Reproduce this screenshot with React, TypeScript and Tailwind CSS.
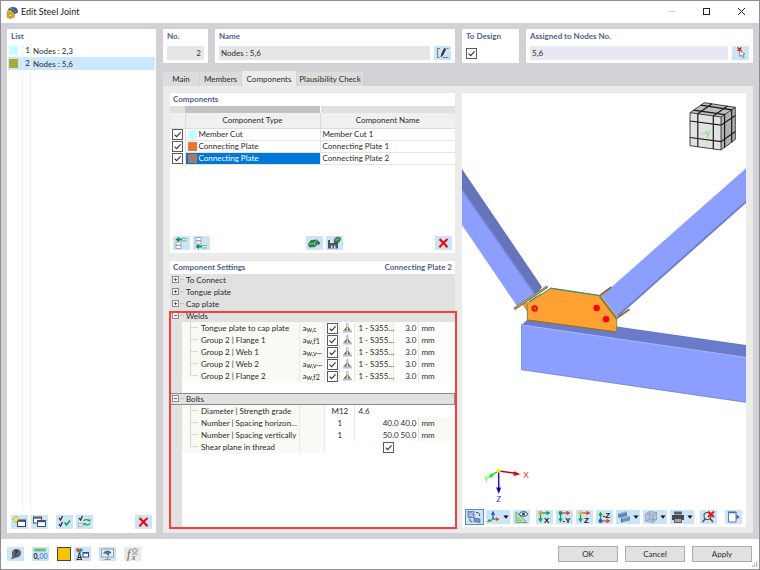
import { useState, type ReactNode } from "react";
import clsx from "clsx";

// ── data ──────────────────────────────────────────────────────────────────────
const JOINTS = [
  { no: 1, name: "Nodes : 2,3", swatch: "bg-[#c8ffff]" },
  { no: 2, name: "Nodes : 5,6", swatch: "bg-[#a9a93a]" },
];

const TABS = [
  { name: "Main", width: "w-[37px]" },
  { name: "Members", width: "w-[42px]" },
  { name: "Components", width: "w-[55px]" },
  { name: "Plausibility Check", width: "w-[67px]" },
];

const COMPONENTS = [
  { type: "Member Cut", name: "Member Cut 1", swatch: "bg-[#c8ffff]" },
  { type: "Connecting Plate", name: "Connecting Plate 1", swatch: "bg-[#e8772e]" },
  { type: "Connecting Plate", name: "Connecting Plate 2", swatch: "bg-[#a67a68]" },
];

const WELDS = [
  { label: "Tongue plate to cap plate", sub: "w,c" },
  { label: "Group 2 | Flange 1", sub: "w,f1" },
  { label: "Group 2 | Web 1", sub: "w,v···" },
  { label: "Group 2 | Web 2", sub: "w,v···" },
  { label: "Group 2 | Flange 2", sub: "w,f2" },
];

const SPACINGS = [
  { label: "Number | Spacing horizon...", count: "1", value: "40.0 40.0" },
  { label: "Number | Spacing vertically", count: "1", value: "50.0 50.0" },
];

// ── small controls ────────────────────────────────────────────────────────────
function Check({ label }: { label: string }) {
  return (
    <label className="relative inline-block size-[11px] align-middle">
      <input
        type="checkbox"
        defaultChecked
        aria-label={label}
        className="peer block size-full appearance-none border border-[#5a5a5a] bg-white"
      />
      <svg
        viewBox="0 0 11 11"
        className="pointer-events-none absolute inset-0 hidden size-full peer-checked:block"
      >
        <path d="M2.6 5.6 4.6 7.6 8.6 3.4" fill="none" stroke="#333" strokeWidth="1.1" />
      </svg>
    </label>
  );
}

interface ToolProps {
  label: string;
  children: ReactNode;
  caret?: boolean;
  active?: boolean;
  disabled?: boolean;
}

function Tool({ label, children, caret, active, disabled }: ToolProps) {
  return (
    <button
      type="button"
      aria-label={label}
      disabled={disabled}
      className={clsx(
        "flex h-[14px] shrink-0 items-center",
        disabled ? "bg-[#e9e9e9]" : "bg-[#cce4f7]",
        active && "outline outline-[#5b8fc0]",
      )}
    >
      <svg viewBox="0 0 17 14" className="h-[14px] w-[17px]">
        {children}
      </svg>
      {caret && (
        <svg viewBox="0 0 7 14" className="h-[14px] w-[7px]">
          <path d="M.5 5.5h5L3 8.700z" fill="#111" />
        </svg>
      )}
    </button>
  );
}

function RedCross() {
  return (
    <path d="M4.500 3.200C6.600 5 9.600 8 12.500 11.200M12.600 3C9.600 5.400 6.600 8.400 4.400 11.400" stroke="#f00808" strokeWidth="2.200" fill="none" />
  );
}

function Heading({ children }: { children: ReactNode }) {
  return <h2 className="font-bold text-[#4f6090]">{children}</h2>;
}

// ── title bar ─────────────────────────────────────────────────────────────────
function TitleBar() {
  return (
    <header className="flex h-[22px] shrink-0 items-center bg-white pl-[5px]">
      <svg viewBox="0 0 13 13" className="size-[13px]">
        <path d="M1.500 4.200C3 1.200 7 .2 9.600 1.600 11.600 2.600 12.400 5 11.600 7L8.400 8 5 4.200z" fill="#3f5c86" />
        <path d="M2.500 3.200C4.500 2 8 2.200 9.400 6" fill="none" stroke="#86a3c8" strokeWidth=".8" />
        <path d="M1 5.600 4 4.400 6.600 5.800 8.600 8 8.200 11.200 4.400 12.600 1.200 11.600z" fill="#e3b52c" stroke="#8c6d14" strokeWidth=".5" />
        <circle cx="4.400" cy="9.200" r="1.700" fill="#f6dc7c" stroke="#7d6210" strokeWidth=".6" />
      </svg>
      <h1 className="ml-[2px] text-[9px] leading-3 text-[#222]">Edit Steel Joint</h1>
      <div className="ml-auto flex">
        <button type="button" aria-label="Minimize" className="h-[22px] w-[35px]">
          <svg viewBox="0 0 35 22" className="size-full">
            <path d="M14 10.500h7" stroke="#d4d4d4" />
          </svg>
        </button>
        <button type="button" aria-label="Maximize" className="h-[22px] w-[35px]">
          <svg viewBox="0 0 35 22" className="size-full">
            <rect x="14.500" y="7.500" width="6" height="6" fill="none" stroke="#222" />
          </svg>
        </button>
        <button type="button" aria-label="Close" className="h-[22px] w-[35px]">
          <svg viewBox="0 0 35 22" className="size-full">
            <path d="m14 7 7 7m0-7-7 7" stroke="#222" />
          </svg>
        </button>
      </div>
    </header>
  );
}

// ── list of joints ────────────────────────────────────────────────────────────
function JointList() {
  const [selected, setSelected] = useState(2);

  return (
    <aside className="flex w-[149px] shrink-0 flex-col bg-white">
      <div className="px-1 pt-[2px] pb-[3px]">
        <Heading>List</Heading>
      </div>
      <div className="flex flex-1 flex-col px-px">
        <ul>
          {JOINTS.map((j) => (
            <li key={j.no}>
              <button
                type="button"
                onClick={() => setSelected(j.no)}
                className={clsx(
                  "flex h-[13px] w-full items-center text-left",
                  selected === j.no && "bg-[#cce8ff]",
                )}
              >
                <span className={clsx("ml-px size-[9px]", j.swatch)} />
                <span className="ml-1 h-full w-[9px] border-x border-[#f0f0f0] text-right leading-[13px]">
                  {j.no}
                </span>
                <span className="ml-[2px]">{j.name}</span>
              </button>
            </li>
          ))}
        </ul>
        <div className="ml-[14px] w-[9px] flex-1 border-x border-[#f0f0f0]" />
      </div>
      <div className="flex items-center gap-[3px] p-1">
        <Tool label="New">
          <rect x="6.500" y="5" width="8" height="6.500" fill="#fff" stroke="#34405a" />
          <path d="M6.500 6h8" stroke="#34405a" strokeWidth="1.600" />
          <path d="M5 1v7M1.500 4.500h7M2.500 2l5 5M7.500 2l-5 5" stroke="#b7a614" strokeWidth=".9" />
          <circle cx="5" cy="4.500" r="1.800" fill="#fff04a" />
        </Tool>
        <Tool label="Copy">
          <rect x="2.500" y="2" width="8" height="6" fill="#fff" stroke="#46506a" />
          <path d="M2.500 3h8" stroke="#46506a" strokeWidth="1.400" />
          <rect x="6.500" y="5.500" width="8" height="6" fill="#fff" stroke="#46506a" />
          <path d="M6.500 6.500h8" stroke="#46506a" strokeWidth="1.400" />
        </Tool>
        <span className="w-[2px]" />
        <Tool label="Select all">
          <path d="m3 3 1.500 2 2-4M3 9l1.500 2 2-4" fill="none" stroke="#222" strokeWidth="1.200" />
          <path d="m8.500 7.500 2 2.500 3.500-4.500" fill="none" stroke="#22a045" strokeWidth="1.700" />
        </Tool>
        <Tool label="Invert selection">
          <path d="m3 3 1.500 2 2-4" fill="none" stroke="#222" strokeWidth="1.200" />
          <rect x="2.500" y="8.500" width="3.500" height="3" fill="#fff" stroke="#99a" strokeWidth=".7" />
          <path d="M7.500 6c1-1.800 4-1.800 5.500-.5M14 8.500c-1 1.800-4 1.800-5.500.5" fill="none" stroke="#22a045" strokeWidth="1.400" />
          <path d="m14.500 3.800-.3 3-2.700-.8zM7.200 10.700l.3-3 2.700.9z" fill="#22a045" />
        </Tool>
        <span className="flex-1" />
        <Tool label="Delete">
          <RedCross />
        </Tool>
      </div>
    </aside>
  );
}

// ── header fields ─────────────────────────────────────────────────────────────
function HeaderFields() {
  return (
    <div className="grid grid-cols-[45px_240px_57px_1fr] gap-[7px]">
      <div className="h-[34px] bg-white px-1 pt-[2px]">
        <label htmlFor="joint-no" className="block font-bold text-[#4f6090]">
          No.
        </label>
        <input
          id="joint-no"
          defaultValue="2"
          className="mt-[5px] block h-[14px] w-full bg-[#e6e6e6] px-[3px] text-right text-[#333]"
        />
      </div>
      <div className="h-[34px] bg-white px-1 pt-[2px]">
        <label htmlFor="joint-name" className="block font-bold text-[#4f6090]">
          Name
        </label>
        <div className="mt-[5px] flex gap-1">
          <input
            id="joint-name"
            defaultValue="Nodes : 5,6"
            className="h-[14px] min-w-0 flex-1 bg-[#e6e6e6] px-[2px]"
          />
          <Tool label="Edit name">
            <path d="M6 2.500H3.500v9h2M9 11.500h5.500" fill="none" stroke="#777" />
            <path d="m11.200 2.500-3.200 6.500" stroke="#333" strokeWidth="2.200" />
            <path d="m6.800 11.500.2-3 1.800 1z" fill="#222" />
            <path d="M12.500 2.500h2" stroke="#777" />
          </Tool>
        </div>
      </div>
      <div className="h-[34px] bg-white px-1 pt-[2px]">
        <Heading>To Design</Heading>
        <div className="mt-[7px] flex">
          <Check label="To Design" />
        </div>
      </div>
      <div className="h-[34px] bg-white px-1 pt-[2px]">
        <label htmlFor="assigned" className="block font-bold text-[#4f6090]">
          Assigned to Nodes No.
        </label>
        <div className="mt-[5px] flex gap-1">
          <input
            id="assigned"
            defaultValue="5,6"
            className="h-[14px] min-w-0 flex-1 bg-[#e8e8f3] px-[2px]"
          />
          <Tool label="Pick nodes">
            <path d="m7.500 4 .3 6.500 1.700-1.500 1.300 2.800 1.300-.6-1.300-2.600 2.200-.4z" fill="#fff" stroke="#666" strokeWidth=".7" />
            <path d="m5.500 1.500 4 3.500m0-3.500-4 3.500" stroke="#e8151b" strokeWidth="1.400" />
          </Tool>
        </div>
      </div>
    </div>
  );
}

// ── components table ──────────────────────────────────────────────────────────
function ComponentsCard() {
  return (
    <section className="flex h-[160px] flex-col bg-white">
      <div className="px-[3px] pt-px pb-[2px]">
        <Heading>Components</Heading>
      </div>
      <table className="w-full table-fixed border-collapse">
        <colgroup>
          <col className="w-[15px]" />
          <col />
          <col />
        </colgroup>
        <thead>
          <tr className="h-[7px]">
            <td className="bg-[#e0e0e0]" />
            <td className="bg-[#c3c3c3]" />
            <td className="border-l border-white bg-[#e0e0e0]" />
          </tr>
          <tr className="h-[15px] bg-[#f0f0f0]">
            <td className="border-r border-b border-[#dcdcdc]" />
            <th className="border-r border-b border-[#dcdcdc] font-normal">Component Type</th>
            <th className="border-b border-[#dcdcdc] font-normal">Component Name</th>
          </tr>
        </thead>
        <tbody>
          {COMPONENTS.map((c, i) => (
            <tr key={c.name} className="h-[12px]">
              <td className="border-r border-[#dcdcdc] p-0 text-center leading-none">
                <Check label={c.name} />
              </td>
              <td
                className={clsx(
                  "border-r border-b border-[#e4e4e4] p-0",
                  i === 2 && "bg-[#0078d7] text-white",
                )}
              >
                <div className="flex h-[11px] items-center">
                  <span className={clsx("ml-[2px] size-[9px]", c.swatch)} />
                  <span className="ml-[2px]">{c.type}</span>
                </div>
              </td>
              <td className="border-b border-[#e4e4e4] py-0 pl-[2px] leading-[11px]">{c.name}</td>
            </tr>
          ))}
        </tbody>
      </table>
      <div className="mt-auto flex gap-[3px] px-[3px] pb-[3px]">
        <Tool label="Insert above">
          <rect x="3" y="6" width="5" height="3" fill="#fff" stroke="#999" strokeWidth=".8" />
          <rect x="3" y="9.500" width="5" height="3" fill="#fff" stroke="#999" strokeWidth=".8" />
          <path d="M5 3.500h4" stroke="#159148" strokeWidth="2" />
          <path d="M2.500 3.500 6 .8v5.400z" fill="#159148" />
          <path d="M9 2.500h5M9 5h5" stroke="#6cb58c" strokeWidth=".9" />
        </Tool>
        <Tool label="Insert below">
          <rect x="3" y="1.500" width="5" height="3" fill="#fff" stroke="#999" strokeWidth=".8" />
          <rect x="3" y="5" width="5" height="3" fill="#fff" stroke="#999" strokeWidth=".8" />
          <path d="M5 10.500h4" stroke="#159148" strokeWidth="2" />
          <path d="M2.500 10.500 6 7.800v5.400z" fill="#159148" />
          <path d="M9 9.500h5M9 12h5" stroke="#6cb58c" strokeWidth=".9" />
        </Tool>
        <span className="flex-1" />
        <Tool label="Load component">
          <path d="M2.500 8 5 4.500l6-.5 1 3-2.500 3.500-6 .5z" fill="#2f8a4a" stroke="#14532a" strokeWidth=".7" />
          <path d="M3 8l5.500-.5 2-3M8.500 7.500l1 3" fill="none" stroke="#9fd4ab" strokeWidth=".8" />
          <path d="M12 4.500 14.500 7 12 9.500z" fill="#555" />
        </Tool>
        <Tool label="Save component">
          <path d="M2 4h10v8.500H2z" fill="#4e5563" />
          <path d="M4 4h4v3H4zM5 9.500h1.500v3H5zM8 9.500h1.500v3H8z" fill="#dfe7ef" />
          <path d="m8 4 2-2.500 4-.3.700 2.300-2 2.800-4 .3z" fill="#2f8a4a" stroke="#14532a" strokeWidth=".6" />
          <path d="m8.500 4 3.500-.3 1.500-2" fill="none" stroke="#9fd4ab" strokeWidth=".7" />
        </Tool>
        <span className="w-[86px]" />
        <Tool label="Delete component">
          <RedCross />
        </Tool>
      </div>
    </section>
  );
}

// ── component settings ────────────────────────────────────────────────────────
function Group({ label, open, framed }: { label: string; open?: boolean; framed?: boolean }) {
  return (
    <tr className="h-[12px] bg-[#e1e1e1]">
      <th
        colSpan={8}
        scope="rowgroup"
        className={clsx("p-0 text-left font-normal", framed && "outline -outline-offset-1 outline-[#8a8a8a]")}
      >
        <button type="button" aria-expanded={!!open} className="flex h-[12px] w-full items-center">
          <svg viewBox="0 0 16 12" className="h-[12px] w-4">
            <rect x="2.500" y="2.500" width="6" height="6" fill="#f4f4f4" stroke="#8c8c8c" />
            <path d={open ? "M4 5.500h3" : "M4 5.500h3M5.500 4v3"} stroke="#555" strokeWidth=".9" />
            <path d="M10 5.500h4" stroke="#c4c4c4" />
          </svg>
          <span>{label}</span>
        </button>
      </th>
    </tr>
  );
}

function LabelCell({ children, last }: { children: ReactNode; last?: boolean }) {
  return (
    <>
      <td className="bg-[#e1e1e1] p-0" />
      <th scope="row" className="border-r border-[#e8e8e4] bg-[#fafaf5] p-0 text-left font-normal">
        <div className="flex h-[12px] items-center whitespace-nowrap">
          <svg viewBox="0 0 19 12" className="h-[12px] w-[19px] shrink-0">
            <path d={last ? "M8.500 0v5.500H16" : "M8.500 0v12M8.500 5.500H16"} fill="none" stroke="#d6d6d6" />
          </svg>
          {children}
        </div>
      </th>
    </>
  );
}

function SettingsCard() {
  const symbol = "border-r border-[#e8e8e4] bg-[#fafaf5] p-0 pl-[2px] whitespace-nowrap";

  return (
    <section className="relative flex flex-1 flex-col bg-white">
      <div className="flex justify-between px-[3px] pt-px pb-[2px]">
        <Heading>Component Settings</Heading>
        <Heading>Connecting Plate 2</Heading>
      </div>
      <table className="w-full table-fixed border-collapse">
        <colgroup>
          <col className="w-[12px]" />
          <col />
          <col className="w-[25px]" />
          <col className="w-[15px]" />
          <col className="w-[15px]" />
          <col className="w-[39px]" />
          <col className="w-[25px]" />
          <col className="w-[36px]" />
        </colgroup>
        <tbody>
          <Group label="To Connect" />
          <Group label="Tongue plate" />
          <Group label="Cap plate" />
          <Group label="Welds" open />
          {WELDS.map((w, i) => (
            <tr key={w.label} className="h-[12px]">
              <LabelCell last={i === WELDS.length - 1}>{w.label}</LabelCell>
              <td className={symbol}>
                <div className="flex h-[12px] items-center">
                  <span>a</span>
                  <span className="pt-[2px] text-[7px]">{w.sub}</span>
                </div>
              </td>
              <td className="border-r border-[#e8e8e4] p-0 text-center leading-none">
                <Check label={w.label} />
              </td>
              <td className="border-r border-[#e8e8e4] p-0">
                <svg viewBox="0 0 15 12" className="h-[12px] w-[15px]">
                  <path d="M6 1h2.500v5H6z" fill="#b4cdee" />
                  <path d="M3 8.500h9v2H3z" fill="#a3c0e8" />
                  <path d="M6.700 4.500v4H3.500zM7.800 4.500v4H11z" fill="#9a5f1c" />
                </svg>
              </td>
              <td className="border-r border-[#e8e8e4] bg-[#fafaf5] p-0 pl-[3px] whitespace-nowrap">1 - S355...</td>
              <td className="border-r border-[#e8e8e4] p-0 pr-[2px] text-right">3.0</td>
              <td className="bg-[#fdfdfa] p-0 pl-[2px]">mm</td>
            </tr>
          ))}
          <tr className="h-[11px]">
            <td className="bg-[#e1e1e1] p-0" />
            <td colSpan={7} className="p-0" />
          </tr>
          <Group label="Bolts" open framed />
          <tr className="h-[12px]">
            <LabelCell>Diameter | Strength grade</LabelCell>
            <td className={symbol} />
            <td colSpan={2} className="border-r border-[#e8e8e4] p-0 text-center">M12</td>
            <td colSpan={3} className="p-0 pl-[3px]">4.6</td>
          </tr>
          {SPACINGS.map((s) => (
            <tr key={s.label} className="h-[12px]">
              <LabelCell>{s.label}</LabelCell>
              <td className={symbol} />
              <td colSpan={2} className="border-r border-[#e8e8e4] p-0 text-center">{s.count}</td>
              <td colSpan={2} className="border-r border-[#e8e8e4] p-0 pr-[2px] text-right">{s.value}</td>
              <td className="bg-[#fafaf5] p-0 pl-[2px]">mm</td>
            </tr>
          ))}
          <tr className="h-[12px]">
            <LabelCell last>Shear plane in thread</LabelCell>
            <td className={symbol} />
            <td colSpan={2} className="p-0" />
            <td colSpan={2} className="p-0 pl-1 text-center leading-none">
              <Check label="Shear plane in thread" />
            </td>
            <td />
          </tr>
        </tbody>
      </table>
      <div className="w-[12px] flex-1 bg-[#e1e1e1]" />
      {/* highlight frame around welds and bolts */}
      <div className="pointer-events-none absolute top-[50px] -right-[2px] -bottom-[2px] -left-px border-2 border-[#f5403c]" />
    </section>
  );
}

// ── 3d view ───────────────────────────────────────────────────────────────────
function Scene() {
  return (
    <svg viewBox="462 93 284 415" preserveAspectRatio="xMidYMin slice" className="h-[415px] w-full">
      {/* left diagonal */}
      <path d="M462 169 542 287 535 297 462 191z" fill="#6675bb" />
      <path d="M462 190 535.500 295.500 517 306 462 225z" fill="#8c9fff" />
      <path d="M462 190 535.500 295.500" stroke="#7a8bdc" strokeWidth="1.500" />
      {/* right diagonal */}
      <path d="M746 200v3L619 316l-4-1z" fill="#6d7dcb" />
      <path d="M746 168.300v32.200L616.700 315.500 601.700 295.700z" fill="#8c9fff" />
      {/* chord */}
      <path d="M521.500 325 527 320l90 6.500L746 345v13z" fill="#6b7bc9" />
      <path d="M521.500 324.500 746 357v45.500L521.500 369.700z" fill="#8c9fff" />
      <path d="M522 325 746 357.500" stroke="#a3b3ff" strokeWidth="1.200" />
      <path d="M521.500 369.700 746 402.300" stroke="#6f80d6" strokeWidth=".8" />
      <path d="M521.500 324v46" stroke="#5c9db4" strokeWidth=".8" />
      {/* gusset plate */}
      <path d="m522 304 5.500-2v10z" fill="#e99a35" />
      <path d="M527.300 303.500 550.700 288.500 600 295.700 616.700 318.300V332l-89.400-12z" fill="#ffa033" stroke="#6f8a52" />
      <path d="M527.300 320 616.700 332" stroke="#a06c2a" strokeWidth="1.200" />
      <path d="M529 301.500 550.700 288l49.300 7.500" fill="none" stroke="#3d8d80" />
      {/* cap plates */}
      <path d="m514.300 308.800 33.200-22.300" stroke="#4f7357" strokeWidth="2.600" />
      <path d="m515 308 32-21.400" stroke="#eea13c" strokeWidth="1.100" />
      <path d="m541 293.500 8.500-5.500" stroke="#fff" />
      <path d="m600 295.500 11.500-8.500M617 318l12.500-8.800" stroke="#8c6a3c" strokeWidth="2" />
      <path d="m600 296 17 22.500" stroke="#4f7357" strokeWidth="2.400" />
      <path d="m600.500 296 16.500 22" stroke="#eea13c" />
      {/* bolts */}
      <circle cx="534.700" cy="308.400" r="3.200" fill="#f00" />
      <path d="m533 306.700 3.400 3.400m0-3.400-3.400 3.400" stroke="#ff9c9c" strokeWidth=".7" />
      <circle cx="596.700" cy="308" r="3.200" fill="#f00" />
      <circle cx="606" cy="319.300" r="3.200" fill="#f00" />

      {/* navigation cube */}
      <path d="M690 112.700 704.300 102.700 735.300 107.300 721 117z" fill="#bdbdbd" />
      <path d="M690 112.700 721 117v33l-31-4.300z" fill="#e2e2e2" />
      <path d="M721 117 735.300 107.300v32.200L721 150z" fill="#b0b0b0" />
      <g fill="none" stroke="#1a1a1a" strokeWidth="1.200">
        <path d="M690 112.700 704.300 102.700 735.300 107.300 721 117zM690 112.700v33L721 150l14.300-10.500v-32.200M721 117v33" strokeWidth=".8" />
        <path d="M697.800 113.800v33M713.300 116v33M690 121l31 4.200 14.300-9.800M690 137.500l31 4.200 14.300-10.300" />
        <path d="m697.800 113.800 14.200-10M713.300 116l14.200-10M693.600 110.200l31 4.400v33M700.700 105.200l31 4.600v32.500" />
      </g>
      <text x="702" y="135.500" fontSize="9" fontWeight="700" fill="#7be07b">-y</text>
      <text x="726" y="132" fontSize="6" fill="#d98a8a">x</text>

      {/* axes */}
      <path d="M498.700 471v17" stroke="#1010c8" strokeWidth="1.400" />
      <path d="M496.200 487.500h5l-2.500 6.500z" fill="#0a0ab8" />
      <path d="m498.700 471 17 2.300" stroke="#d00000" strokeWidth="1.400" />
      <path d="m514 471.200 6.500 3-7 1.700z" fill="#e00000" />
      <path d="m498.700 471-7 4" stroke="#10c010" strokeWidth="1.400" />
      <path d="m488.500 478 2-4.500 3.500 2.800z" fill="#0f0" />
      <circle cx="498.700" cy="470.700" r="2" fill="#ffee00" />
      <text x="523.500" y="477.500" fontSize="8" fill="#f01818">X</text>
      <text x="484" y="481.500" fontSize="7" fill="#20e020">Y</text>
      <text x="496.200" y="501.500" fontSize="8" fill="#2a2ae8">Z</text>
    </svg>
  );
}

interface AxisProps {
  axis: string;
  x: number;
  right: string;
  dot: string;
}

function AxisIcon({ axis, x, right, dot }: AxisProps) {
  return (
    <>
      <path d="M4.500 3h7" stroke={right} strokeWidth="1.200" />
      <path d="m10.500.7 4 2.300-4 2.300z" fill={right} />
      <path d="M4.500 3v6" stroke="#159a54" strokeWidth="1.200" />
      <path d="m2.300 8.500 2.200 4 2.200-4z" fill="#159a54" />
      <circle cx="4.500" cy="3" r="1.900" fill={dot} />
      <AxisLetter x={x} y={12.5}>{axis}</AxisLetter>
    </>
  );
}

function AxisLetter({ x, y, children }: { x: number; y: number; children: ReactNode }) {
  return (
    <text
      x={x}
      y={y}
      fontSize="8"
      fontWeight="700"
      fill="#1a1a1a"
      className="font-['Liberation_Sans',sans-serif]"
    >
      {children}
    </text>
  );
}

function ViewToolbar() {
  return (
    <div className="mt-auto flex items-center gap-[3px] px-1 pb-[3px]">
      <Tool label="Show model" active>
        <rect x="2" y="1.500" width="6" height="6" fill="#7f9cd0" stroke="#5873a8" strokeWidth=".7" />
        <path d="m3 6.500 4-4M3 3l4 4" stroke="#e8f0fb" strokeWidth=".8" />
        <path d="m8 8 6 1v3.500l-6-1z" fill="#7d93b8" stroke="#4b5f88" strokeWidth=".7" />
        <path d="M10 2.500c3-.5 4 1.500 3.500 3.500M6.500 12C4 12 3.500 10.500 4 8.500" fill="none" stroke="#444" strokeWidth=".9" />
      </Tool>
      <Tool label="Axes" caret>
        <path d="M7 9V3.500" stroke="#1c50d8" strokeWidth="1.300" />
        <path d="m5 4.800 2-4 2 4z" fill="#1c50d8" />
        <path d="M7 9h4.500" stroke="#e04420" strokeWidth="1.300" />
        <path d="m10 7.200 3.500 2-3.500 1.800z" fill="#e04420" />
        <path d="M7 9l-3 2" stroke="#2aa84a" strokeWidth="1.300" />
        <path d="m1 12 2-3.200 1.800 2.700z" fill="#2aa84a" />
      </Tool>
      <Tool label="Measure">
        <path d="M3 2v10.500h11z" fill="#b5e3a5" stroke="#5fa060" strokeWidth=".8" />
        <path d="M5 8v2.500h3z" fill="#eaf6ff" stroke="#5fa060" strokeWidth=".6" />
        <ellipse cx="10.500" cy="4" rx="4" ry="2.300" fill="#fff" stroke="#28406e" />
        <circle cx="10.500" cy="4" r="1.500" fill="#28406e" />
      </Tool>
      <span />
      <Tool label="View in X">
        <AxisIcon axis="X" x={8} right="#159a54" dot="#e8a01a" />
      </Tool>
      <Tool label="View in -Y">
        <AxisIcon axis="-Y" x={6.5} right="#d9432a" dot="#159a54" />
      </Tool>
      <Tool label="View in Z">
        <AxisIcon axis="Z" x={8} right="#d9432a" dot="#d8c21a" />
      </Tool>
      <Tool label="View in -Z">
        <path d="M4.500 10.500V5" stroke="#159a54" strokeWidth="1.200" />
        <path d="m2.300 5.500 2.200-4 2.200 4z" fill="#159a54" />
        <path d="M4.500 11h7" stroke="#d9432a" strokeWidth="1.200" />
        <path d="m10.500 8.700 4 2.300-4 2.300z" fill="#d9432a" />
        <circle cx="4.500" cy="11" r="1.900" fill="#2455c8" />
        <AxisLetter x={6.5} y={7.5}>-Z</AxisLetter>
      </Tool>
      <Tool label="Display style" caret>
        <path d="m2 3.500 8-2 1 .8V6l-8 2-1-.8z" fill="#5e86b8" />
        <path d="m2 3.500 8-2 1 .8-8 2z" fill="#a2bfe2" />
        <path d="m5 8 8-2 1 .8v3.700l-8 2-1-.8z" fill="#6f91bb" />
        <path d="m5 8 8-2 1 .8-8 2z" fill="#a2bfe2" />
        <path d="M5 8v3.700l1 .8V8.800z" fill="#49698f" />
      </Tool>
      <Tool label="Transparency" caret>
        <path d="m2.500 4 4-2.500 7 1v7l-3.500 3-7.500-1.500z" fill="#b9c5dc" stroke="#8494b3" strokeWidth=".7" />
        <path d="m2.500 4 7.500 1.300 3.500-2.800M10 5.300v7M6.500 1.500V9l7 .8M2.500 11l4-2" fill="none" stroke="#8494b3" strokeWidth=".7" />
      </Tool>
      <Tool label="Print" caret>
        <path d="M4 1.500h8v3H4z" fill="#5b5e63" />
        <path d="M2 5h12v5H2z" fill="#46494f" />
        <path d="M4.500 8.500h7v4h-7z" fill="#9da5ad" stroke="#444" strokeWidth=".8" />
      </Tool>
      <span />
      <Tool label="Reset zoom">
        <circle cx="7.500" cy="6" r="3.500" fill="#dceaf5" stroke="#555" strokeWidth="1.200" />
        <path d="m5.500 8.500-3 3.500M10 8.500l3 3.500" stroke="#555" strokeWidth="1.600" />
        <path d="m8 1.500 6 5.500m0-5.500-6 5.500" stroke="#ee1010" strokeWidth="2" />
      </Tool>
      <span className="flex-1" />
      <Tool label="Detach view">
        <path d="M3.500 2h7.500v10H3.500z" fill="#fff" stroke="#5a7fb0" />
        <path d="M3 2.500h8.500" stroke="#3d6fb5" strokeWidth="1.500" />
        <path d="M11.500 4.500 14.500 7l-3 2.500z" fill="#555" />
      </Tool>
    </div>
  );
}

// ── footer ────────────────────────────────────────────────────────────────────
function Footer() {
  return (
    <footer className="relative flex h-[30px] shrink-0 items-center gap-2 bg-white pr-[7px] pl-[6px]">
      <Tool label="Help">
        <path d="M9.500 2c3 0 4.500 2 4.500 4.200S12 10.500 9.500 10.500L4 12.500l1.300-3.200C4 5 6 2 9.500 2z" fill="#5d6570" />
        <text x="7.200" y="9" fontSize="7" fontWeight="700" fill="#111">?</text>
      </Tool>
      <Tool label="Units">
        <path d="M2 1.500h12v3H2z" fill="#7cc47f" />
        <path d="M3.500 2v1.500m2-1.500v1.500m2-1.500v1.500m2-1.500v1.500m2-1.500v1.500" stroke="#3f9446" strokeWidth=".6" />
        <text x="1.500" y="12.200" fontSize="7" fontWeight="700" fill="#222">0,</text>
        <text x="7.500" y="12.200" fontSize="7" fill="#2a6fe0">00</text>
      </Tool>
      <div className="flex gap-[3px]">
        <button
          type="button"
          aria-label="Color"
          className="size-[14px] border border-[#444] bg-[#f5c400]"
        />
        <Tool label="Display options">
          <circle cx="4" cy="3" r="1.800" fill="#e33" />
          <circle cx="7" cy="3" r="1.600" fill="#3b6fe0" />
          <circle cx="5.500" cy="4.800" r="1.600" fill="#2ca84a" />
          <path d="M3.500 12.500 5.500 6l2 6.500M4 10.500h3.500" fill="none" stroke="#222" />
          <path d="M2.500 12.500H8" stroke="#222" strokeWidth=".8" />
          <rect x="9" y="5.500" width="5.500" height="4.500" fill="#fff" stroke="#3c4f7c" />
          <path d="M9 6h5.500" stroke="#3c4f7c" strokeWidth="1.400" />
        </Tool>
      </div>
      <Tool label="Screen">
        <rect x="2.500" y="2" width="12" height="8" fill="#e6eef5" stroke="#8a99a8" strokeWidth=".9" />
        <path d="M8.500 10v2M5.500 12.500h6" stroke="#8a99a8" />
        <path d="M4 6.500C5.500 3 10.500 2.500 12.500 6L10 7v2.500L7.500 7z" fill="#4f74a0" />
      </Tool>
      <Tool label="Formula" disabled>
        <text x="3" y="11" fontSize="12" fontStyle="italic" fill="#666" className="font-['Liberation_Serif',serif]">f</text>
        <text x="8" y="12.500" fontSize="7" fontStyle="italic" fill="#666">x</text>
        <ellipse cx="11" cy="3.500" rx="2.500" ry="1.800" fill="none" stroke="#888" strokeWidth=".9" />
        <path d="M8 7h5.500" stroke="#888" strokeWidth=".9" />
      </Tool>
      <div className="ml-auto flex gap-[7px]">
        {["OK", "Cancel", "Apply"].map((name) => (
          <button
            key={name}
            type="button"
            className="h-[16px] w-[60px] border border-[#adadad] bg-[#e1e1e1] text-center"
          >
            {name}
          </button>
        ))}
      </div>
      <svg viewBox="0 0 7 7" className="absolute right-px bottom-px size-[7px]">
        <path d="M5 1h1.300M3 3h1.300M5 3h1.300M1 5h1.300M3 5h1.300M5 5h1.300" stroke="#b0b0b0" strokeWidth="1.300" />
      </svg>
    </footer>
  );
}

// ── dialog ────────────────────────────────────────────────────────────────────
export default function App() {
  const [tab, setTab] = useState("Components");

  return (
    <div className="flex min-h-screen flex-col border border-[#8f8f93] bg-[#d1d1d6] font-[Lato,sans-serif] text-[8px] leading-[10px] text-[#2b2b2b]">
      <TitleBar />
      <main className="flex flex-1 gap-[7px] p-[6px]">
        <JointList />
        <div className="flex min-w-0 flex-1 flex-col">
          <HeaderFields />
          <div role="tablist" className="mt-2 flex h-[15px] items-end">
            {TABS.map((t) => (
              <button
                key={t.name}
                type="button"
                role="tab"
                aria-selected={t.name === tab}
                onClick={() => setTab(t.name)}
                className={clsx(
                  "border-r border-[#d1d1d6] text-center whitespace-nowrap",
                  t.width,
                  t.name === tab ? "h-[15px] bg-[#ebebeb]" : "h-[14px] bg-[#dcdcdc]",
                )}
              >
                {t.name}
              </button>
            ))}
          </div>
          <div className="flex flex-1 gap-[7px] bg-[#ebebeb] px-[7px] pt-[7px] pb-[6px]">
            <div className="flex w-[285px] shrink-0 flex-col gap-2">
              <ComponentsCard />
              <SettingsCard />
            </div>
            <section className="flex min-w-0 flex-1 flex-col bg-white">
              <Scene />
              <ViewToolbar />
            </section>
          </div>
        </div>
      </main>
      <Footer />
    </div>
  );
}
